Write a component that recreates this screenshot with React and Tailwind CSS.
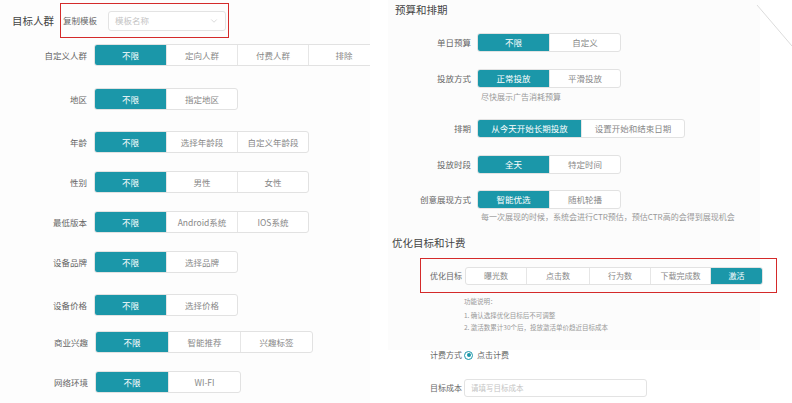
import { ChevronDown } from 'lucide-react'

const TEAL = 'bg-[#1b97a9]'

const LEFT_ROWS = [
  { label: '自定义人群', mt: 'mt-[6px]', opts: ['不限', '定向人群', '付费人群', '排除'] },
  { label: '地区', mt: 'mt-[22px]', opts: ['不限', '指定地区'] },
  { label: '年龄', mt: 'mt-[21px]', opts: ['不限', '选择年龄段', '自定义年龄段'] },
  { label: '性别', mt: 'mt-[18px]', opts: ['不限', '男性', '女性'] },
  { label: '最低版本', mt: 'mt-[18px]', opts: ['不限', 'Android系统', 'IOS系统'] },
  { label: '设备品牌', mt: 'mt-[18px]', opts: ['不限', '选择品牌'] },
  { label: '设备价格', mt: 'mt-[21px]', opts: ['不限', '选择价格'] },
  { label: '商业兴趣', mt: 'mt-[15px]', opts: ['不限', '智能推荐', '兴趣标签'], wide: true },
  { label: '网络环境', mt: 'mt-[18px]', opts: ['不限', 'WI-FI'], wide: true },
]

function Segmented({ opts, active = 0, w, h }) {
  return (
    <div className={`flex shrink-0 ${h} rounded-[3px] border border-[#e2e2e2] overflow-hidden bg-white`}>
      {opts.map((o, i) => (
        <div key={o}
          className={`${w} shrink-0 flex items-center justify-center text-[8.5px]
            ${i > 0 ? 'border-l border-[#e6e6e6]' : ''}
            ${i === active ? `${TEAL} text-white` : 'text-[#888]'}`}>
          {o}
        </div>
      ))}
    </div>
  )
}

function LeftPanel() {
  return (
    <div className="w-[370px] shrink-0 overflow-hidden bg-[#fdfdfd]">
      <div className="flex items-center pt-[3px]">
        <div className="w-[60px] shrink-0 pl-[12px] text-[10.5px] text-[#444]">目标人群</div>
        <div className="flex items-center shrink-0 w-[169px] h-[35px] border border-[#d42a2a] pl-[2px]">
          <span className="w-[45px] text-[8.5px] text-[#666]">复制模板</span>
          <div className="flex items-center justify-between w-[118px] h-[20px] border border-[#e3e3e3] rounded-[3px] bg-white px-[6px]">
            <span className="text-[8.5px] text-[#c4c4c4]">模板名称</span>
            <ChevronDown className="w-[10px] h-[10px] text-[#c4c4c4]" strokeWidth={1.5} />
          </div>
        </div>
      </div>
      {LEFT_ROWS.map(r => (
        <div key={r.label} className={`flex items-center ${r.mt}`}>
          <div className={`${r.wide ? 'w-[88px]' : 'w-[87px]'} shrink-0 text-right text-[8.5px] text-[#666]`}>{r.label}</div>
          <div className="ml-[7px] shrink-0">
            <Segmented opts={r.opts} w={r.wide ? 'w-[72px]' : 'w-[71px]'} h="h-[22px]" />
          </div>
        </div>
      ))}
    </div>
  )
}

function RRow({ label, mt, opts, w = 'w-[71px]' }) {
  return (
    <div className={`flex items-center ${mt}`}>
      <div className="w-[91px] shrink-0 text-right text-[8.5px] text-[#666]">{label}</div>
      <div className="ml-[6px] shrink-0">
        <Segmented opts={opts} w={w} h="h-[19px]" />
      </div>
    </div>
  )
}

function RightPanel() {
  const goals = [
    { t: '曝光数', w: 'w-[60px]' },
    { t: '点击数', w: 'w-[63px]' },
    { t: '行为数', w: 'w-[61px]' },
    { t: '下载完成数', w: 'w-[60px]' },
    { t: '激活', w: 'w-[52px]' },
  ]
  return (
    <div className="relative w-[412px] shrink-0 ml-[10px]">
      <div className="w-[372px] ml-[8px] h-[350px] bg-[#fcfcfc] absolute top-0 left-0" />
      <div className="relative">
        <div className="pl-[15px] h-[20px] leading-[20px] text-[10.5px] text-[#444]">预算和排期</div>
        <RRow label="单日预算" mt="mt-[13px]" opts={['不限', '自定义']} />
        <RRow label="投放方式" mt="mt-[17px]" opts={['正常投放', '平滑投放']} />
        <div className="ml-[101px] mt-[3px] h-[12px] leading-[12px] text-[8px] text-[#999]">尽快展示广告消耗预算</div>
        <RRow label="排期" mt="mt-[16px]" opts={['从今天开始长期投放', '设置开始和结束日期']} w="w-[103px]" />
        <RRow label="投放时段" mt="mt-[17px]" opts={['全天', '特定时间']} />
        <RRow label="创意展现方式" mt="mt-[16px]" opts={['智能优选', '随机轮播']} />
        <div className="ml-[101px] mt-[2px] h-[12px] leading-[12px] text-[8px] text-[#999] whitespace-nowrap">
          每一次展现的时候，系统会进行CTR预估，预估CTR高的会得到展现机会
        </div>
        <div className="pl-[12px] mt-[12px] h-[16px] leading-[16px] text-[10.5px] text-[#444]">优化目标和计费</div>
        <div className="ml-[40px] mt-[7px] w-[357px] h-[35px] border border-[#d42a2a] flex items-center pl-[9px]">
          <span className="w-[35px] shrink-0 text-[8px] text-[#666]">优化目标</span>
          <div className="flex shrink-0 h-[18px] rounded-[3px] border border-[#e2e2e2] overflow-hidden bg-white">
            {goals.map((g, i) => (
              <div key={g.t}
                className={`${g.w} flex items-center justify-center text-[8px]
                  ${i > 0 ? 'border-l border-[#e6e6e6]' : ''}
                  ${i === 4 ? `${TEAL} text-white` : 'text-[#888]'}`}>
                {g.t}
              </div>
            ))}
          </div>
        </div>
        <div className="ml-[84px] mt-[3px] text-[6.5px] leading-[11px] text-[#999]">
          <div>功能说明：</div>
          <div className="mt-[2px] leading-[12px]">1. 确认选择优化目标后不可调整</div>
          <div className="leading-[12px]">2. 激活数累计30个后，投放激活单价趋近目标成本</div>
        </div>
        <div className="flex items-center ml-[50px] mt-[15px] h-[14px]">
          <span className="w-[34px] text-[8px] text-[#666]">计费方式</span>
          <span className="w-[9px] h-[9px] rounded-full border border-[#1b97a9] flex items-center justify-center">
            <span className="w-[4px] h-[4px] rounded-full bg-[#1b97a9]" />
          </span>
          <span className="ml-[4px] text-[8px] text-[#666]">点击计费</span>
        </div>
        <div className="flex items-center ml-[50px] mt-[17px]">
          <span className="w-[34px] text-[8px] text-[#666]">目标成本</span>
          <div className="w-[183px] h-[18px] border border-[#e3e3e3] rounded-[3px] bg-white flex items-center px-[6px] text-[7.5px] text-[#c4c4c4]">
            请填写目标成本
          </div>
        </div>
      </div>
    </div>
  )
}

export default function App() {
  return (
    <div className="relative w-[792px] h-[403px] bg-white overflow-hidden flex"
      style={{ fontFamily: '"Noto Sans CJK SC", "Noto Sans", sans-serif' }}>
      <LeftPanel />
      <RightPanel />
      <svg className="absolute top-0 right-0" width="40" height="50" viewBox="0 0 40 50">
        <line x1="5" y1="5" x2="40" y2="46" stroke="#dcdcdc" strokeWidth="1" />
      </svg>
    </div>
  )
}
